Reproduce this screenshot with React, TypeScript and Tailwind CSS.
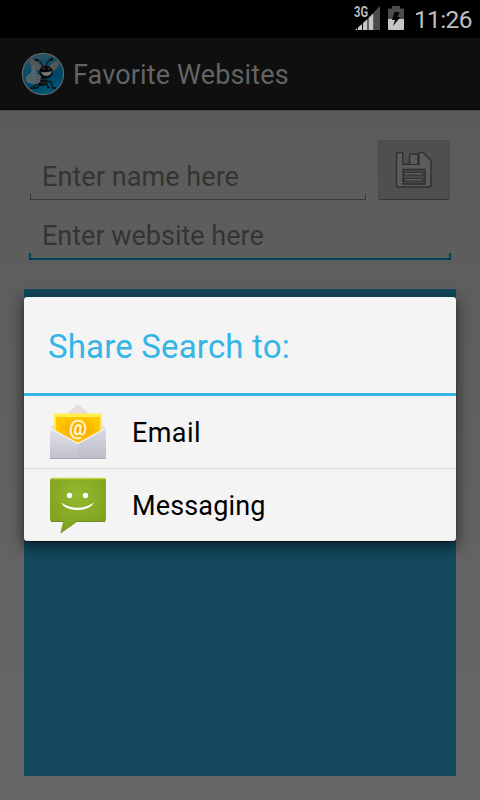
import React from "react";

function StatusBar() {
  return (
    <header className="flex h-[38px] items-start justify-end bg-black pr-[9px]">
      <svg className="mr-[8px] mt-[5px]" width="26" height="26" viewBox="0 0 26 26">
        <path d="M26 1V25H20V7Z" fill="#4c4c4c" />
        <path d="M19.5 8V25H14.5V13ZM13.5 14V25H9V18ZM8 19V25H4V22.5ZM3.2 23V25H1Z" fill="#c6c6c6" />
        <text x="0" y="12" fontFamily="Roboto, sans-serif" fontSize="14" fontWeight="700" textLength="14" lengthAdjust="spacingAndGlyphs" fill="#bebebe" stroke="black" strokeWidth="1.5" paintOrder="stroke">3G</text>
      </svg>
      <svg className="mr-[10px] mt-[6px]" width="16" height="24" viewBox="0 0 16 24">
        <path d="M0 3.5Q0 2.5 1 2.5H4V0H12V2.5H15Q16 2.5 16 3.5V13H0Z" fill="#4c4c4c" />
        <path d="M0 13H16V23Q16 24 15 24H1Q0 24 0 23Z" fill="#c6c6c6" />
        <path d="M6.5 6H11.5L9.5 11H12.5L5 20L7 14H4Z" fill="#050505" />
      </svg>
      <span className="mt-[3px] w-[57px] whitespace-nowrap text-[24.5px] leading-[34px] tracking-[-0.65px] text-[#bebebe]">11:26</span>
    </header>
  );
}

function BugLogo() {
  return (
    <svg className="mt-[2px]" width="44" height="44" viewBox="0 0 44 44">
      <defs>
        <linearGradient id="sky" x1=".3" y1="0" x2=".6" y2="1">
          <stop offset="0" stopColor="#36545d" />
          <stop offset=".35" stopColor="#0b4d68" />
          <stop offset=".65" stopColor="#004468" />
          <stop offset="1" stopColor="#005a74" />
        </linearGradient>
      </defs>
      <circle cx="22" cy="22" r="20.6" fill="url(#sky)" stroke="#5d6668" strokeWidth="1.2" />
      <path d="M21 20Q11 17 9 11Q8 6 13 8Q19 11 22 18ZM26 18Q31 9 36 9Q40 11 36 16Q32 20 26 21Z" fill="#565655" />
      <path d="M22 16Q21 8 15 8M25 16Q25 9 31 7.5" fill="none" stroke="#111" strokeWidth="1.1" />
      <path d="M14 7.5L17 8.5M29 8L32 6.5" stroke="#0c0c0c" strokeWidth="2" />
      <path d="M18 31L12 35M20 32L16 36M26 29L30 30L32 36M25 30L27 35M9 36H16M26 35.5H29M31 36H35" fill="none" stroke="#080d10" strokeWidth="1.3" />
      <ellipse cx="21" cy="29.5" rx="5" ry="4.5" fill="#0a0d10" />
      <ellipse cx="25" cy="20" rx="6.8" ry="6.2" fill="#090909" />
      <path d="M19 30Q22 32 25 30M19 27Q22 29 25 27" fill="none" stroke="#33383b" strokeWidth=".8" />
      <ellipse cx="23" cy="16.5" rx="1.7" ry="1" fill="#303030" />
      <ellipse cx="28" cy="16.8" rx="1.5" ry="1" fill="#303030" />
      <path d="M20 20Q25 21 31 19Q30 24 25 24Q21 23.5 20 20Z" fill="#777" />
      <path d="M12 13Q15 14 15 18L16 22Q20 23 20 25L19 30Q17 33 12 32L7 31Q4 29 5 25Q7 22 10 21Q11 17 10 14Z" fill="#53636c" />
      <path d="M15 24L19 25M15 27L18 28M14 30L17 30" stroke="#3b4c56" strokeWidth=".7" />
    </svg>
  );
}

function SaveIcon() {
  return (
    <svg width="38" height="38" viewBox="0 0 38 38" fill="none" stroke="#2f2f2f" strokeWidth="1.4">
      <path d="M3 1.5H6.7Q7.7 1.5 7.7 2.5V13.3H24V2.5Q24 1.5 25 1.5H28L36 9.5V34.5Q36 36 34.5 36H3Q1.5 36 1.5 34.5V3Q1.5 1.5 3 1.5Z" fill="#5b5b5b" />
      <path d="M14.5 13V4.5Q14.5 3 16 3H21.5Q23 3 23 4.5V13" fill="#5b5b5b" />
      <path d="M8 18.5H30V33H8Z" fill="#484848" />
      <path d="M9.5 21.5H28.5V24H9.5ZM9.5 27.5H28.5V30H9.5Z" fill="#606060" strokeWidth="1" />
    </svg>
  );
}

function EmailIcon() {
  return (
    <svg width="56" height="56" viewBox="0 0 56 56">
      <defs>
        <linearGradient id="env" x2="0" y2="1">
          <stop stopColor="#e4e4ec" />
          <stop offset="1" stopColor="#bfc0cb" />
        </linearGradient>
        <radialGradient id="letter">
          <stop stopColor="#f5a000" />
          <stop offset="1" stopColor="#ffc800" />
        </radialGradient>
      </defs>
      <path d="M0 24L26 2Q28 0 30 2L56 24L28 42Z" fill="#e8dcdd" />
      <path d="M4 10H52V35H4Z" fill="#ffe75c" />
      <path d="M6 13H50V40H6Z" fill="url(#letter)" />
      <path d="M4 9.5H52V12.5H4Z" fill="#fff04b" />
      <text x="28" y="31" textAnchor="middle" fontFamily="Roboto, sans-serif" fontSize="20" fontWeight="500" fill="#fff7c9" stroke="#fff7c9" strokeWidth=".4">@</text>
      <path d="M0 24L28 39.5L56 24V53.5Q56 55 54.5 55H1.5Q0 55 0 53.5Z" fill="url(#env)" />
      <path d="M28 39.5L56 24V53.5Q56 55 54.5 55H28Z" fill="#a7a8b7" opacity=".15" />
      <path d="M0 24L28 39.5L56 24" fill="none" stroke="#f5f4f7" strokeWidth="1.1" />
      <path d="M0 54.5H56" stroke="#aaaab3" />
    </svg>
  );
}

function MessagingIcon() {
  return (
    <svg width="56" height="57" viewBox="0 0 56 57">
      <defs>
        <radialGradient id="bubble" cx=".5" cy=".3" r=".75">
          <stop stopColor="#93b92e" />
          <stop offset="1" stopColor="#7d9e1d" />
        </radialGradient>
      </defs>
      <path d="M3 1H53Q56 1 56 4V42Q56 45 53 45H26L10.5 56L13 45H3Q0 45 0 42V4Q0 1 3 1Z" fill="url(#bubble)" />
      <path d="M1.5 1.5H54.5" stroke="#bed735" strokeWidth="1.6" />
      <path d="M1 44.5H13M26 44.5H55M10.5 56L26 45" stroke="#718b25" fill="none" />
      <circle cx="19.5" cy="18.5" r="2.7" fill="white" />
      <circle cx="35.5" cy="18.5" r="2.7" fill="white" />
      <path d="M11 25.5Q27.5 36 44 25.5Q40 33 27.5 33Q15 33 11 25.5Z" fill="white" />
    </svg>
  );
}

function ShareDialog() {
  return (
    <section role="dialog" className="absolute left-[24px] top-[297px] h-[244px] w-[432px] overflow-visible rounded-[3px] bg-[#f4f4f4] shadow-[0_4px_13px_2px_rgba(0,0,0,0.5),0_1px_1px_rgba(0,0,0,0.5)]">
      <h2 className="h-[99px] whitespace-nowrap border-b-[3px] border-[#33b5e5] pl-6 text-[33px] font-normal leading-[99px] tracking-[0.17px] text-[#33b5e5]">Share Search to:</h2>
      <button className="flex h-[73px] w-full items-center border-b border-[#d7d7d7] pl-[26px] text-left">
        <EmailIcon />
        <span className="ml-[26px] mt-[2px] text-[27px] leading-8 tracking-[0.4px] text-black">Email</span>
      </button>
      <button className="flex h-[72px] w-full items-center pl-[26px] text-left">
        <MessagingIcon />
        <span className="ml-[26px] mt-[2px] text-[27px] leading-8 tracking-[0.15px] text-black">Messaging</span>
      </button>
    </section>
  );
}

export default function App() {
  return (
    <div className="relative flex h-[800px] w-[480px] flex-col overflow-hidden bg-black font-['Roboto',sans-serif]">
      <StatusBar />
      <div className="flex h-[72px] items-center border-b-2 border-[#090909] bg-[#0f0f0f] pl-[21px]">
        <BugLogo />
        <h1 className="ml-2 mt-[4px] whitespace-nowrap text-[27px] font-normal leading-8 tracking-[0.14px] text-[#636363]">Favorite Websites</h1>
      </div>
      <main className="h-[690px] bg-linear-to-b from-[#5b5b5b] to-[#676767] px-6 pt-[30px] shadow-[inset_0_1px_0_#454545]">
        <div className="flex h-[60px] items-end pl-[6px]">
          <div className="flex h-[60px] w-[336px] flex-col">
            <div className="h-[54px] pl-3 pt-[21px] text-[27px] leading-8 tracking-[0.07px] text-[#343434]">Enter name here</div>
            <div className="h-[6px] border-x border-b border-[#3b3b3b]" />
          </div>
          <button className="ml-3 flex h-[60px] w-[72px] items-start justify-center rounded-[2px] border border-[#4b4b4b] border-b-[#353535] bg-[#4f4f4f] pt-[10px]">
            <SaveIcon />
          </button>
        </div>
        <div className="ml-[5px] flex h-[60px] w-[422px] flex-col">
          <div className="h-[53px] pl-[13px] pt-5 text-[27px] leading-8 text-[#343434]">Enter website here</div>
          <div className="h-[7px] border-x-2 border-b-2 border-[#00415a]" />
        </div>
        <div className="mt-[29px] h-[487px] bg-[#14485c]" />
      </main>
      <ShareDialog />
    </div>
  );
}
